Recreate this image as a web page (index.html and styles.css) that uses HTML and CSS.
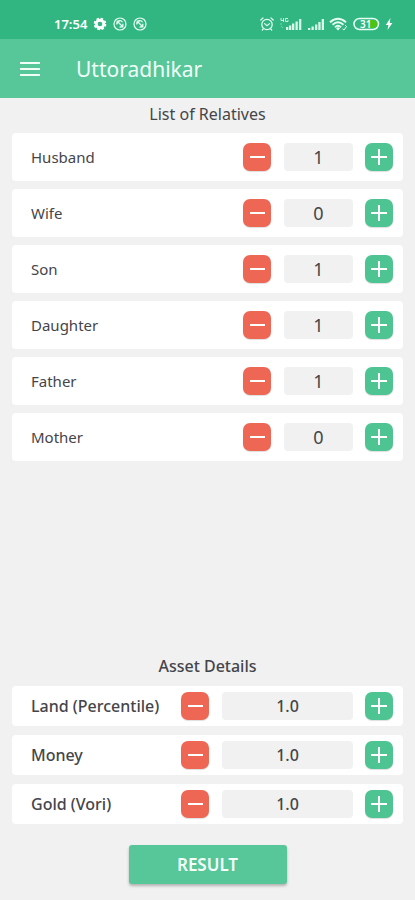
FILE: index.html
```html
<!DOCTYPE html>
<html lang="en">
<head>
<meta charset="utf-8">
<meta name="viewport" content="width=device-width, initial-scale=1">
<title>Uttoradhikar</title>
<link rel="stylesheet" href="styles.css">
</head>
<body>
<svg class="defs" aria-hidden="true">
  <symbol id="minus" viewBox="0 0 28 28"><path d="M7 14H22" stroke="#fff" stroke-width="2"/></symbol>
  <symbol id="plus" viewBox="0 0 28 28"><path d="M6 14H22M14 6V22" stroke="#fff" stroke-width="2"/></symbol>
  <symbol id="sync" viewBox="0 0 14 14"><g fill="none" stroke="#e6fff3" stroke-width="1.2"><circle cx="7" cy="7" r="6"/><path d="M4 7.5A3 3 0 0 1 9.5 5.2M10 6.8A3 3 0 0 1 6.5 10M4.5 4.5L9.5 9.5M4.2 7V4.2H7M9.8 7.2V9.8H7.2"/></g></symbol>
</svg>
<div class="app">
  <header>
    <div class="status">
      <div class="status-left">
        <span class="clock">17:54</span>
        <svg width="14" height="14" viewBox="0 0 12 12"><circle cx="6" cy="6" r="3.2" fill="none" stroke="#fff" stroke-width="2.4"/><circle cx="6" cy="6" r="4.7" fill="none" stroke="#fff" stroke-width="1.4" stroke-dasharray="2.2 1.49"/></svg>
        <svg width="14" height="14"><use href="#sync"/></svg>
        <svg width="14" height="14"><use href="#sync"/></svg>
      </div>
      <div class="status-right">
        <svg width="14" height="14" viewBox="0 0 14 14" fill="none" stroke="#e6fff3" stroke-width="1.2" stroke-linecap="round"><circle cx="7" cy="7.5" r="5.2"/><path d="M4.6 6.6L7 8.8L9.6 6.6M.8 3L3 1M13.2 3L11 1M3.2 12L2.3 13M10.8 12L11.7 13"/></svg>
        <svg width="24" height="14" viewBox="0 0 24 14"><path d="M4.5 1V5M2 1V3.5H5M6.5 1.5H9M6.5 1.5V4.5H9V3" fill="none" stroke="#d9f8ea" stroke-width=".9"/><path d="M1 7H3M2 9L4 11" stroke="#79d7b0"/><path d="M7 10H9.3V13H7ZM10 8.5H12.3V13H10ZM13 6.5H15.3V13H13ZM16.5 4.5H18.8V13H16.5ZM20 2H22.3V13H20Z" fill="#d9f8ea"/></svg>
        <svg width="16" height="14" viewBox="0 0 16 14"><path d="M0 11H2.3V13H0ZM3.5 9.5H5.8V13H3.5ZM7 7.5H9.3V13H7ZM10.3 5H12.6V13H10.3ZM13.7 2H16V13H13.7Z" fill="#d9f8ea"/></svg>
        <svg width="19" height="14" viewBox="0 0 19 14" fill="none" stroke="#e6fff3" stroke-width="1.9"><path d="M1 5.2Q9 -1.8 17 5.2M3.5 7.8Q9 2.9 14.5 7.8M6 10.2Q9 7.5 12 10.2"/><path d="M9 10L11 11.4L9 13.4L7 11.4Z" fill="#e6fff3" stroke="none"/><path d="M13.5 11.8L15 13L17.5 9.5L16 8" stroke-width="1"/></svg>
        <svg width="27" height="14" viewBox="0 0 27 14"><rect x="1" y="1.5" width="24.5" height="11" rx="5.5" fill="none" stroke="#e6fff3" stroke-width="1.5"/><path d="M17 3H20A4 4 0 0 1 20 11H17Z" fill="#4cc315"/><text class="charge" x="7" y="10.5">31</text></svg>
        <svg width="8" height="12" viewBox="0 0 8 12"><path d="M5.5 0L.8 7H3.4L2.5 12L7.4 5H4.7Z" fill="#fff"/></svg>
      </div>
    </div>
    <div class="toolbar">
      <button class="menu" type="button" aria-label="Menu"><svg width="20" height="16" viewBox="0 0 20 16"><path d="M0 2H20M0 8H20M0 14H20" stroke="#f0fff8" stroke-width="2"/></svg></button>
      <h1>Uttoradhikar</h1>
    </div>
  </header>
  <main>
    <section class="relatives">
      <h2>List of Relatives</h2>
      <div class="rows">
        <div class="row"><label for="husband">Husband</label><button class="step less" type="button" aria-label="Decrease"><svg><use href="#minus"/></svg></button><input id="husband" value="1" inputmode="numeric"><button class="step more" type="button" aria-label="Increase"><svg><use href="#plus"/></svg></button></div>
        <div class="row"><label for="wife">Wife</label><button class="step less" type="button" aria-label="Decrease"><svg><use href="#minus"/></svg></button><input id="wife" value="0" inputmode="numeric"><button class="step more" type="button" aria-label="Increase"><svg><use href="#plus"/></svg></button></div>
        <div class="row"><label for="son">Son</label><button class="step less" type="button" aria-label="Decrease"><svg><use href="#minus"/></svg></button><input id="son" value="1" inputmode="numeric"><button class="step more" type="button" aria-label="Increase"><svg><use href="#plus"/></svg></button></div>
        <div class="row"><label for="daughter">Daughter</label><button class="step less" type="button" aria-label="Decrease"><svg><use href="#minus"/></svg></button><input id="daughter" value="1" inputmode="numeric"><button class="step more" type="button" aria-label="Increase"><svg><use href="#plus"/></svg></button></div>
        <div class="row"><label for="father">Father</label><button class="step less" type="button" aria-label="Decrease"><svg><use href="#minus"/></svg></button><input id="father" value="1" inputmode="numeric"><button class="step more" type="button" aria-label="Increase"><svg><use href="#plus"/></svg></button></div>
        <div class="row"><label for="mother">Mother</label><button class="step less" type="button" aria-label="Decrease"><svg><use href="#minus"/></svg></button><input id="mother" value="0" inputmode="numeric"><button class="step more" type="button" aria-label="Increase"><svg><use href="#plus"/></svg></button></div>
      </div>
    </section>
    <section class="assets">
      <h2>Asset Details</h2>
      <div class="rows">
        <div class="row"><label for="land">Land (Percentile)</label><button class="step less" type="button" aria-label="Decrease"><svg><use href="#minus"/></svg></button><input id="land" value="1.0" inputmode="decimal"><button class="step more" type="button" aria-label="Increase"><svg><use href="#plus"/></svg></button></div>
        <div class="row"><label for="money">Money</label><button class="step less" type="button" aria-label="Decrease"><svg><use href="#minus"/></svg></button><input id="money" value="1.0" inputmode="decimal"><button class="step more" type="button" aria-label="Increase"><svg><use href="#plus"/></svg></button></div>
        <div class="row"><label for="gold">Gold (Vori)</label><button class="step less" type="button" aria-label="Decrease"><svg><use href="#minus"/></svg></button><input id="gold" value="1.0" inputmode="decimal"><button class="step more" type="button" aria-label="Increase"><svg><use href="#plus"/></svg></button></div>
      </div>
    </section>
    <button class="result" type="button">RESULT</button>
  </main>
</div>
</body>
</html>
```
FILE: styles.css
```css
* { box-sizing: border-box; }
body {
  margin: 0;
  background: #f1f1f1;
  color: #454549;
  font-family: "Noto Sans", sans-serif;
}
button, input { font-family: inherit; border: 0; padding: 0; }
.defs { position: absolute; width: 0; height: 0; }
.app { min-height: 100vh; display: flex; flex-direction: column; }
.status {
  display: flex;
  justify-content: space-between;
  padding: 14px 22px 5px 54px;
  background: #31b682;
  color: #fff;
}
.status-left, .status-right { display: flex; align-items: center; height: 20px; }
.status-left { gap: 6px; }
.status-right { gap: 5px; }
.clock { font-size: 13px; font-weight: 600; line-height: 20px; }
.charge { font-size: 10px; font-weight: 600; fill: #fff; }
.toolbar {
  display: flex;
  align-items: center;
  gap: 36px;
  height: 59px;
  padding: 0 20px;
  background: #57c699;
}
.menu { display: flex; background: none; }
h1 { margin: 0; color: #f0fff8; font-size: 21px; font-weight: 400; line-height: 28px; }
h2 { margin: 0; text-align: center; font-size: 16px; font-weight: 400; line-height: 24px; }
main {
  flex: 1;
  display: flex;
  flex-direction: column;
  padding: 4px 12px 16px;
}
.rows { display: flex; flex-direction: column; }
.row {
  display: flex;
  align-items: center;
  padding: 0 10px 0 19px;
  background: #fff;
  border-radius: 4px;
}
.relatives .rows { gap: 8px; margin-top: 7px; }
.relatives .row { height: 48px; }
.assets { margin-top: auto; padding-top: 24px; }
.assets .rows { gap: 9px; margin-top: 8px; }
.assets .row { height: 40px; }
label { flex: 1; font-size: 15px; line-height: 20px; white-space: nowrap; }
.assets label { font-size: 16px; }
.assets h2, .assets label, .assets input { font-weight: 500; }
.step {
  display: flex;
  width: 28px;
  height: 28px;
  border-radius: 7px;
  box-shadow: 0 1px 1px #0002;
}
.step svg { width: 28px; height: 28px; }
.less { background: #ee6754; }
.more { background: #4fc493; }
input {
  width: 69px;
  height: 28px;
  margin: 0 12px 0 13px;
  border-radius: 4px;
  background: #f1f1f1;
  color: #454549;
  text-align: center;
  font-size: 18px;
}
.assets input { width: 131px; font-size: 16px; }
.result {
  align-self: center;
  width: 158px;
  height: 39px;
  margin-top: 21px;
  border-radius: 3px;
  background: #57c699;
  box-shadow: 0 2px 3px #0004;
  color: #f4fffa;
  font-size: 17px;
  font-weight: 600;
}
```
